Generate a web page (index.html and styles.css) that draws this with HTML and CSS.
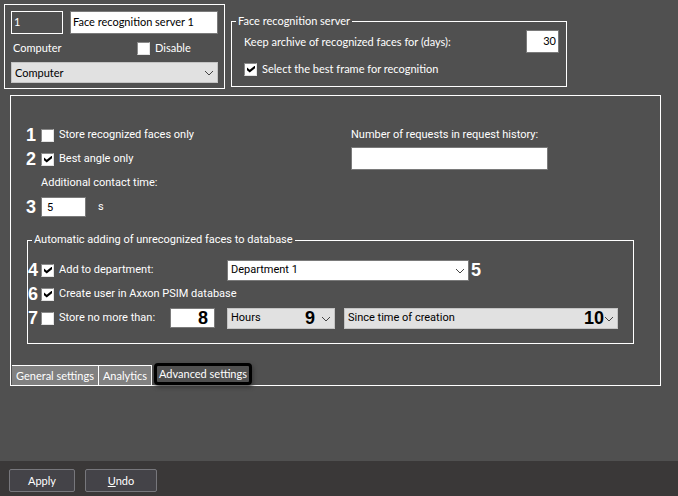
FILE: index.html
```html
<!DOCTYPE html>
<html lang="en">
<head>
    <meta charset="UTF-8">
    <meta name="viewport" content="width=device-width, initial-scale=1.0">
    <title>Face recognition server</title>
    <link rel="stylesheet" href="styles.css">
</head>
<body>
    <header class="top">
        <div class="object">
            <div class="object-row">
                <input type="text" class="object-id" aria-label="Id" value="1" readonly>
                <input type="text" class="object-name" aria-label="Name" value="Face recognition server 1">
            </div>
            <div class="object-row">
                <label class="object-label" for="computer">Computer</label>
                <label class="check"><input type="checkbox">Disable</label>
            </div>
            <div class="select">
                <select id="computer"><option>Computer</option></select>
                <svg class="arrow" viewBox="0 0 10 6"><path d="M1 1l4 4 4-4"/></svg>
            </div>
        </div>
        <fieldset class="server">
            <legend>Face recognition server</legend>
            <div class="server-row">
                <label for="archive">Keep archive of recognized faces for (days):</label>
                <input type="text" id="archive" class="days" value="30">
            </div>
            <label class="check"><input type="checkbox" checked>Select the best frame for recognition</label>
        </fieldset>
    </header>

    <main class="panel">
        <div class="settings">
            <div>
                <div class="row">
                    <span class="num">1</span>
                    <label class="check"><input type="checkbox">Store recognized faces only</label>
                </div>
                <div class="row">
                    <span class="num">2</span>
                    <label class="check"><input type="checkbox" checked>Best angle only</label>
                </div>
                <div class="row">
                    <span class="num"></span>
                    <label for="contact">Additional contact time:</label>
                </div>
                <div class="row">
                    <span class="num">3</span>
                    <input type="text" id="contact" class="short" value="5">
                    <span class="unit">s</span>
                </div>
            </div>
            <div>
                <label class="row" for="history">Number of requests in request history:</label>
                <input type="text" id="history" class="history">
            </div>
        </div>

        <fieldset class="auto">
            <legend>Automatic adding of unrecognized faces to database</legend>
            <div class="auto-row">
                <div class="row">
                    <span class="num">4</span>
                    <label class="check"><input type="checkbox" checked>Add to department:</label>
                </div>
                <div class="department">
                    <div class="select white">
                        <select aria-label="Department"><option>Department 1</option></select>
                        <svg class="arrow" viewBox="0 0 10 6"><path d="M1 1l4 4 4-4"/></svg>
                    </div>
                    <span class="num">5</span>
                </div>
            </div>
            <div class="row">
                <span class="num">6</span>
                <label class="check"><input type="checkbox" checked>Create user in Axxon PSIM database</label>
            </div>
            <div class="auto-row">
                <div class="row">
                    <span class="num">7</span>
                    <label class="check"><input type="checkbox">Store no more than:</label>
                </div>
                <div class="amount">
                    <input type="text" class="short" aria-label="Amount">
                    <span class="num over">8</span>
                </div>
                <div class="select unit-select">
                    <select aria-label="Unit"><option>Hours</option></select>
                    <span class="num over">9</span>
                    <svg class="arrow" viewBox="0 0 10 6"><path d="M1 1l4 4 4-4"/></svg>
                </div>
                <div class="select since">
                    <select aria-label="Since"><option>Since time of creation</option></select>
                    <span class="num over">10</span>
                    <svg class="arrow" viewBox="0 0 10 6"><path d="M1 1l4 4 4-4"/></svg>
                </div>
            </div>
        </fieldset>

        <nav class="tabs">
            <button type="button" class="tab">General settings</button>
            <button type="button" class="tab">Analytics</button>
            <button type="button" class="tab active">Advanced settings</button>
        </nav>
    </main>

    <footer class="bottom">
        <button type="button">Apply</button>
        <button type="button" class="undo"><u>U</u>ndo</button>
    </footer>
</body>
</html>
```
FILE: styles.css
```css
* {
    box-sizing: border-box;
}
body {
    display: flex;
    flex-direction: column;
    min-height: 100vh;
    margin: 0;
    background: #505050;
    color: #fff;
    font-family: Lato, Arial, sans-serif;
    font-size: 11px;
    line-height: 14px;
}
input, select, button {
    font: inherit;
    border-radius: 0;
    margin: 0;
}
input[type="text"] {
    height: 23px;
    padding: 0 5px;
    border: 1px solid #7a7a7a;
    background: #fff;
    color: #000;
}
input[type="checkbox"] {
    appearance: none;
    flex: none;
    width: 13px;
    height: 13px;
    border: 1px solid;
    border-color: #8a8a8a #e3e3e3 #e3e3e3 #8a8a8a;
    background: #fff;
}
input[type="checkbox"]:checked::before {
    content: "";
    display: block;
    width: 8px;
    height: 7px;
    margin: 2px;
    background: #000;
    clip-path: polygon(0 28%, 34% 62%, 100% 0, 100% 40%, 34% 100%, 0 68%);
}
fieldset {
    min-width: 0;
    margin: 0;
    border: 1px solid #fff;
}
legend {
    padding: 0 2px;
}
.check {
    display: flex;
    align-items: center;
    gap: 5px;
}
.select {
    position: relative;
}
select {
    appearance: none;
    display: block;
    width: 100%;
    height: 21px;
    padding: 0 3px;
    border: 1px solid #c4c4c4;
    background: #e1e1e1;
    color: #000;
}
.white select {
    background: #fff;
    border-color: #7a7a7a;
}
.arrow {
    position: absolute;
    top: 8px;
    right: 4px;
    width: 10px;
    height: 6px;
    fill: none;
    stroke: #444;
    pointer-events: none;
}

/* object box and server group */
.top {
    display: flex;
    align-items: flex-start;
    gap: 6px;
    padding: 4px;
}
.object {
    width: 221px;
    padding: 5px 6px;
    border: 1px solid #fff;
}
.object-row {
    display: flex;
    align-items: center;
    height: 24px;
    margin-bottom: 2px;
}
.object-row .object-id {
    width: 52px;
    margin-right: 7px;
    padding: 0 2px 2px;
    border-color: #fff;
    background: #505050;
    color: #fff;
}
.object-row .object-name {
    flex: 1;
    min-width: 0;
    padding: 0 2px 2px;
}
.object-label {
    width: 126px;
    padding-left: 2px;
}
.server {
    width: 336px;
    margin-top: 10px;
    padding: 2px 7px 10px 12px;
}
.server legend {
    margin-left: -8px;
}
.server-row {
    display: flex;
    justify-content: space-between;
    align-items: center;
    margin-bottom: 9px;
}
.server-row .days {
    width: 33px;
    padding: 0 2px 2px;
    text-align: right;
}

/* tab page */
.panel {
    margin: 2px 17px 0 10px;
    padding-top: 27px;
    border: 1px solid #fff;
    font-family: Roboto, Tahoma, sans-serif;
}
.settings {
    display: grid;
    grid-template-columns: 325px 1fr;
    padding-left: 15px;
}
.row {
    display: flex;
    align-items: center;
    height: 24px;
}
.num {
    flex: none;
    width: 15px;
    font: bold 18px/20px "Liberation Sans", Arial, sans-serif;
}
.panel .short {
    width: 45px;
    height: 20px;
}
.unit {
    margin-left: 12px;
}
.history {
    width: 197px;
}
.auto {
    margin: 14px 26px 0 16px;
    padding: 11px 15px 13px 0;
}
.auto legend {
    margin-left: 4px;
}
.auto .row .num {
    width: 13px;
}
.auto-row {
    display: grid;
    grid-template-columns: 142px 57px 117px 1fr;
    align-items: center;
}
.department {
    display: flex;
    grid-column: 3 / 5;
    gap: 2px;
}
.department .select {
    width: 242px;
}
.amount {
    position: relative;
    width: 45px;
}
.unit-select {
    width: 108px;
}
.num.over {
    position: absolute;
    top: 0;
    right: 20px;
    width: auto;
    color: #000;
    pointer-events: none;
}
.amount .over {
    right: 7px;
}
.since .over {
    right: 14px;
}
.tabs {
    display: flex;
    align-items: flex-end;
    margin: 19px 0 0 1px;
    font-family: Lato, Arial, sans-serif;
}
.tab {
    height: 20px;
    padding: 0 4px;
    border: solid #fff;
    border-width: 1px 1px 0 0;
    background: #808080;
    color: #fff;
}
.tab.active {
    height: 22px;
    margin-left: 2px;
    padding: 0 2px;
    border: 3px solid #000;
    border-radius: 4px;
    background: #505050;
    box-shadow: 1px 2px 4px #333;
}

/* bottom bar */
.bottom {
    display: flex;
    gap: 10px;
    margin-top: auto;
    padding: 8px 9px 4px;
    background: #3a3838;
}
.bottom button {
    width: 66px;
    height: 23px;
    padding: 0;
    border: 1px solid #77777c;
    border-radius: 2px;
    background: #444348;
    color: #fff;
}
.bottom .undo {
    width: 72px;
}
```
